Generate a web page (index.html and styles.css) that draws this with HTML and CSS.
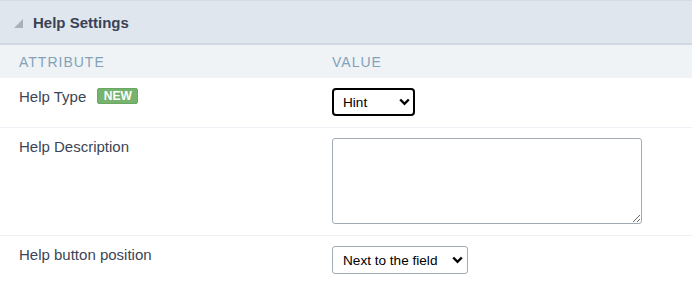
FILE: index.html
```html
<!DOCTYPE html>
<html>
<head>
<meta charset="utf-8">
<link rel="stylesheet" href="styles.css">
</head>
<body>
<div class="panel">
  <div class="panel-head">
    <svg class="caret" width="9" height="9" viewBox="0 0 9 9"><polygon points="9,0 9,9 0,9" fill="#a9b2bc"/></svg>
    <span class="panel-title">Help Settings</span>
  </div>
  <div class="row col-head">
    <div class="cell-label">Attribute</div>
    <div class="cell-value">Value</div>
  </div>
  <div class="row">
    <div class="cell-label">Help Type <span class="badge">NEW</span></div>
    <div class="cell-value">
      <div class="sel-wrap">
        <select class="sel sel-focus"><option>Hint</option></select>
        <svg class="chev" width="11" height="8" viewBox="0 0 11 8"><polyline points="1.2,1.5 5.5,5.8 9.8,1.5" fill="none" stroke="#000" stroke-width="2.4"/></svg>
      </div>
    </div>
  </div>
  <div class="row">
    <div class="cell-label">Help Description</div>
    <div class="cell-value"><textarea class="area"></textarea></div>
  </div>
  <div class="row last">
    <div class="cell-label">Help button position</div>
    <div class="cell-value">
      <div class="sel-wrap">
        <select class="sel"><option>Next to the field</option></select>
        <svg class="chev" width="11" height="8" viewBox="0 0 11 8"><polyline points="1.2,1.5 5.5,5.8 9.8,1.5" fill="none" stroke="#000" stroke-width="2.4"/></svg>
      </div>
    </div>
  </div>
</div>
</body>
</html>
```
FILE: styles.css
```css
html, body {
  margin: 0;
  padding: 0;
  background: #ffffff;
}
body {
  font-family: "Liberation Sans", Arial, sans-serif;
  color: #3b4556;
}
.panel {
  width: 692px;
}
.panel-head {
  display: flex;
  align-items: center;
  height: 42px;
  border-top: 1px solid #d3dbe3;
  border-bottom: 2px solid #d0d9e1;
  background: #dfe6ee;
}
.caret {
  margin-left: 14px;
  margin-right: 10px;
  margin-top: 2px;
}
.panel-title {
  font-size: 15px;
  font-weight: bold;
  color: #394255;
}
.row {
  display: grid;
  grid-template-columns: 332px 1fr;
  border-bottom: 1px solid #edf1f5;
  padding: 10px 0 11px;
}
.row.last {
  border-bottom: none;
}
.col-head {
  background: #eff3f6;
  border-bottom: none;
  padding: 0;
  height: 33px;
  align-items: center;
  text-transform: uppercase;
  font-size: 14px;
  letter-spacing: 1px;
  color: #82a2b9;
}
.cell-label {
  padding-left: 19px;
  font-size: 15px;
  line-height: 16px;
  padding-top: 1px;
  display: flex;
  align-items: flex-start;
}
.col-head .cell-label {
  padding-top: 0;
  font-size: 14px;
  line-height: 16px;
}
.badge {
  display: inline-block;
  margin-left: 11px;
  margin-top: -1px;
  width: 41px;
  height: 16px;
  box-sizing: border-box;
  border: 1px solid #6aa862;
  background: #76b36e;
  color: #ffffff;
  font-size: 12px;
  font-weight: bold;
  line-height: 14px;
  text-align: center;
  border-radius: 2px;
}
.sel-wrap {
  position: relative;
  display: inline-block;
}
.sel {
  display: block;
  -webkit-appearance: none;
  appearance: none;
  height: 28px;
  font-family: "Liberation Sans", Arial, sans-serif;
  font-size: 13.6px;
  color: #000000;
  background: #ffffff;
  border: 1px solid #a3abb6;
  border-radius: 3px;
  padding: 0 20px 0 10px;
  width: 136px;
  margin: 0;
}
.sel-focus {
  width: 83px;
  border: 2px solid #000000;
  border-radius: 4px;
  padding-left: 9px;
}
.chev {
  position: absolute;
  right: 5px;
  top: 10px;
  pointer-events: none;
}
.area {
  display: block;
  width: 310px;
  height: 86px;
  box-sizing: border-box;
  border: 1px solid #a3abb6;
  border-radius: 3px;
  margin: 0;
  padding: 4px;
}
```
